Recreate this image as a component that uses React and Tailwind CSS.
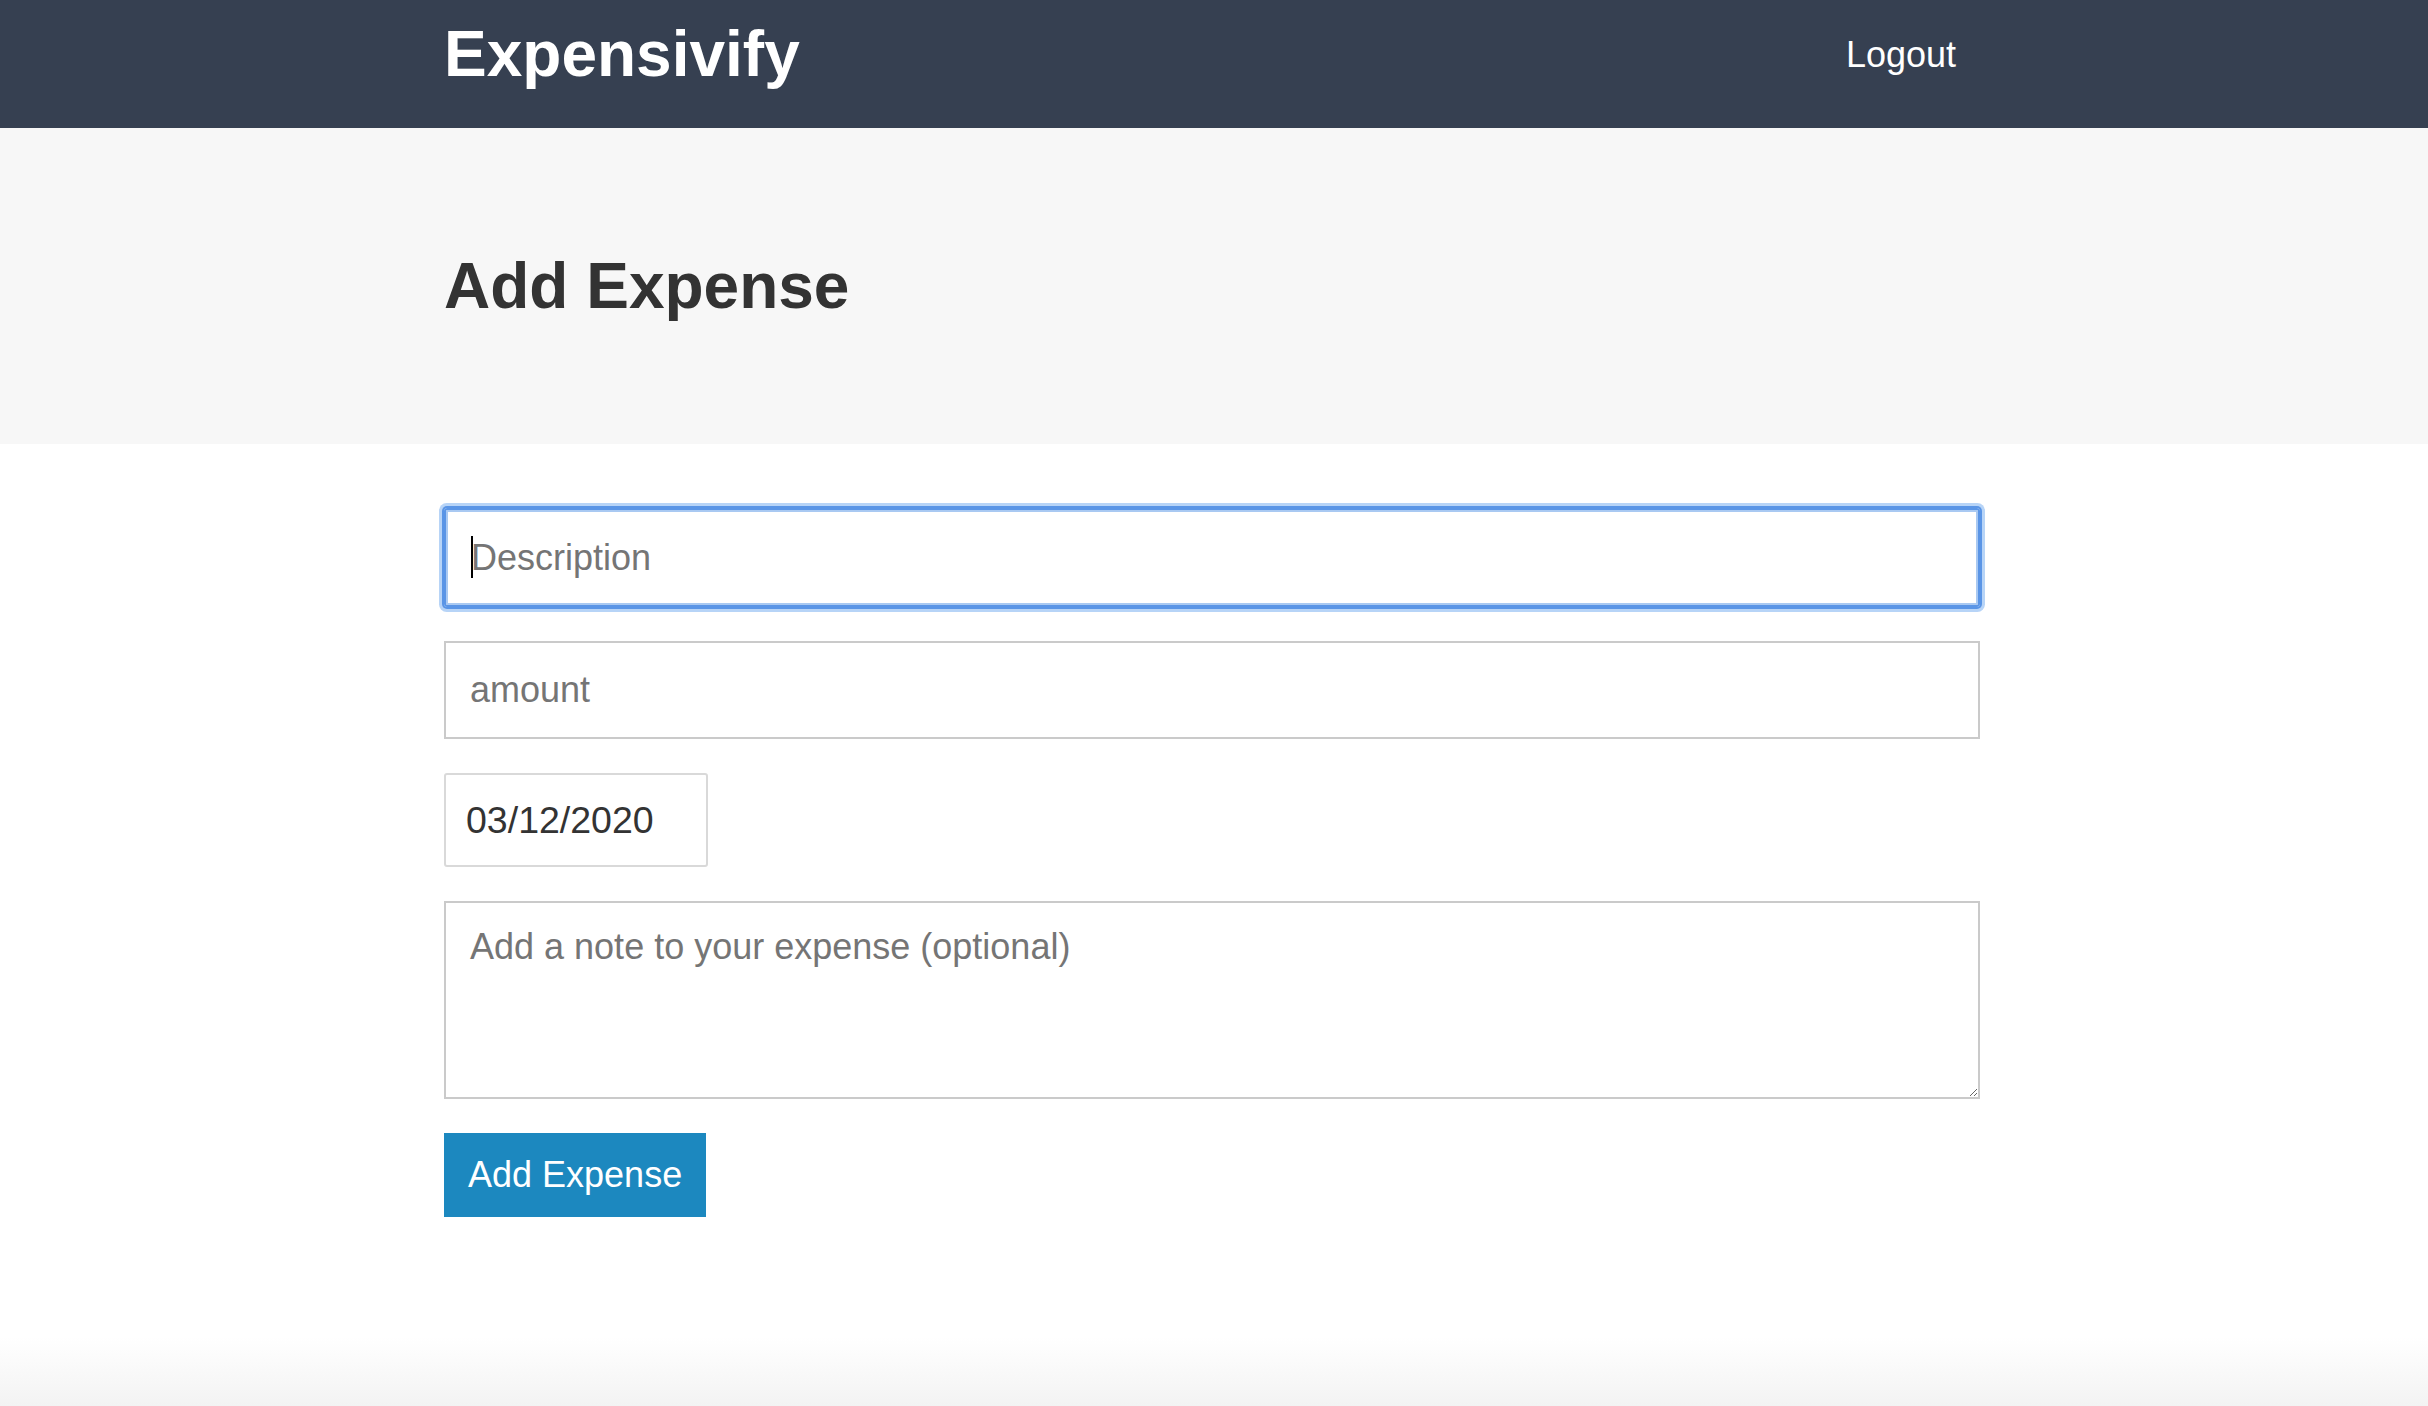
import React from "react"

export default function App() {
  return (
    <div className="min-h-screen flex flex-col bg-white font-['Liberation_Sans',Arial,Helvetica,sans-serif]">
      {/* header */}
      <header className="h-[128px] bg-[#364051]">
        <div className="mx-auto w-[1540px] pr-[4px] flex items-start justify-between">
          <h1 className="mt-[22px] text-[64px] leading-[64px] font-bold text-white">Expensivify</h1>
          <button className="mt-[37px] px-[24px] text-[36px] leading-[36px] text-white">Logout</button>
        </div>
      </header>

      {/* page title */}
      <div className="bg-[#f7f7f7] py-[126px]">
        <div className="mx-auto w-[1540px] pr-[4px]">
          <h2 className="text-[64px] leading-[64px] font-bold text-[#333333]">Add Expense</h2>
        </div>
      </div>

      {/* form */}
      <main className="flex-1">
        <form className="mx-auto w-[1540px] pr-[4px] pt-[64px] flex flex-col items-start gap-[34px]" onSubmit={(e) => e.preventDefault()}>
          <div className="relative w-full">
            <input
              type="text"
              placeholder="Description"
              className="block w-full h-[99px] px-[25px] border-2 border-[#5a95e6] rounded-[3px] text-[36px] text-[#333] placeholder:text-[#757575] outline-none shadow-[inset_0_0_0_2px_#a9c9f2,0_0_0_2px_#5a95e6,0_0_0_5px_#b7d4f7]"
            />
            <span className="absolute left-[27px] top-[28px] w-[2px] h-[42px] bg-black"></span>
          </div>
          <input
            type="text"
            placeholder="amount"
            className="block w-full h-[98px] px-[24px] border-2 border-[#cacaca] text-[36px] text-[#333] placeholder:text-[#757575] outline-none"
          />
          <input
            type="text"
            readOnly
            value="03/12/2020"
            className="block w-[264px] h-[94px] px-[20px] border-2 border-[#d9d9d9] rounded-[3px] text-[37.5px] text-[#333] outline-none"
          />
          <textarea
            placeholder="Add a note to your expense (optional)"
            className="block w-full h-[198px] px-[24px] pt-[22px] border-2 border-[#cacaca] text-[36px] leading-[44px] text-[#333] placeholder:text-[#757575] outline-none"
          ></textarea>
          <button type="submit" className="h-[84px] px-[24px] bg-[#1c88bf] text-white text-[36px] leading-[36px]">
            Add Expense
          </button>
        </form>
      </main>

      <div className="h-[69px] bg-gradient-to-b from-white to-[#f3f3f3]"></div>
    </div>
  )
}
